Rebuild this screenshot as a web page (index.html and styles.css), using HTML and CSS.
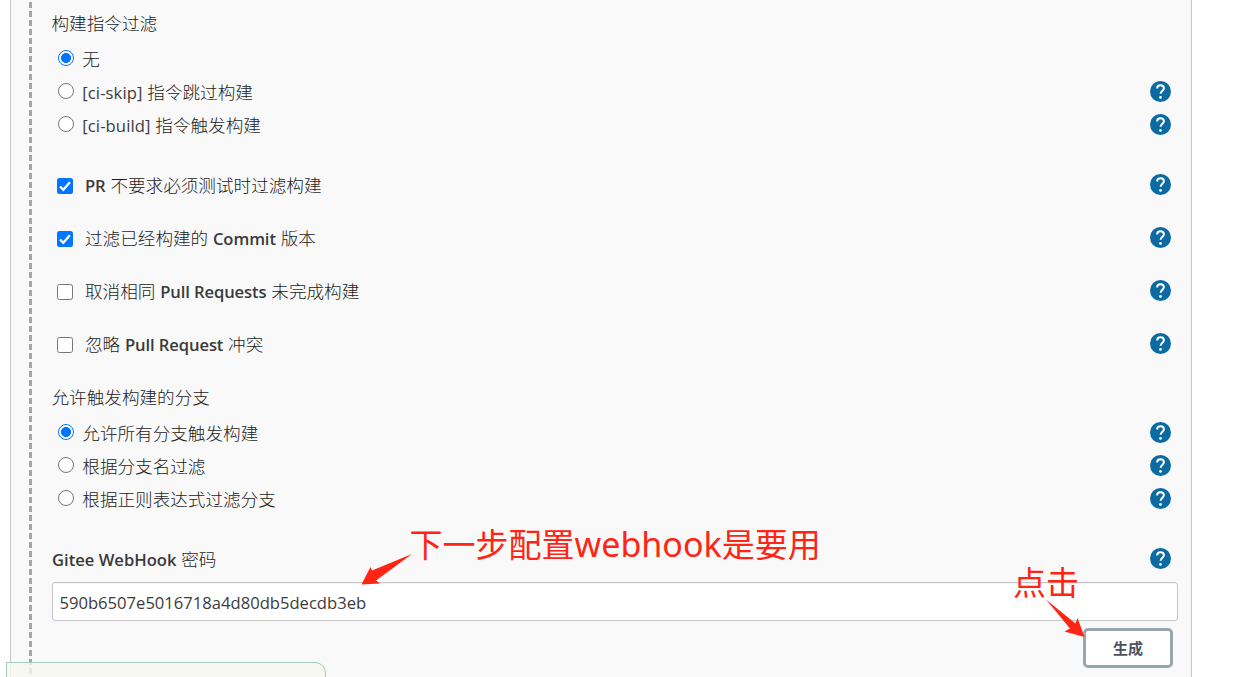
FILE: index.html
```html
<!DOCTYPE html>
<html lang="zh-CN">
<head>
<meta charset="utf-8">
<title>Gitee WebHook</title>
<link rel="stylesheet" href="styles.css">
</head>
<body>
<svg class="defs" width="0" height="0">
  <symbol id="help" viewBox="0 0 21 21">
    <circle cx="10.5" cy="10.5" r="10.5" fill="#0b6aa2"/>
    <path d="M7.1 7.6C7.1 5.5 8.5 4.3 10.5 4.3s3.4 1.2 3.4 3c0 2.3-3.3 2.6-3.3 5.5" fill="none" stroke="#fff" stroke-width="2"/>
    <circle cx="10.5" cy="16.4" r="1.35" fill="#fff"/>
  </symbol>
</svg>
<main class="panel">
  <div class="rail"></div>
  <form class="content">
    <div class="heading">构建指令过滤</div>
    <div class="choice"><i class="radio on"></i><label>无</label></div>
    <div class="choice"><i class="radio"></i><label><span class="lat">[ci-skip]</span> 指令跳过构建</label><svg class="help"><use href="#help"/></svg></div>
    <div class="choice"><i class="radio"></i><label><span class="lat">[ci-build]</span> 指令触发构建</label><svg class="help"><use href="#help"/></svg></div>
    <div class="checks">
      <div class="check"><i class="box on"><svg viewBox="0 0 16 16"><path d="M3 8.5l3.3 3.3L12.9 4.2"/></svg></i><label><b>PR</b> 不要求必须测试时过滤构建</label><svg class="help"><use href="#help"/></svg></div>
      <div class="check"><i class="box on"><svg viewBox="0 0 16 16"><path d="M3 8.5l3.3 3.3L12.9 4.2"/></svg></i><label>过滤已经构建的 <b>Commit</b> 版本</label><svg class="help"><use href="#help"/></svg></div>
      <div class="check"><i class="box"></i><label>取消相同 <b>Pull Requests</b> 未完成构建</label><svg class="help"><use href="#help"/></svg></div>
      <div class="check"><i class="box"></i><label>忽略 <b>Pull Request</b> 冲突</label><svg class="help"><use href="#help"/></svg></div>
    </div>
    <div class="heading">允许触发构建的分支</div>
    <div class="choice"><i class="radio on"></i><label>允许所有分支触发构建</label><svg class="help"><use href="#help"/></svg></div>
    <div class="choice"><i class="radio"></i><label>根据分支名过滤</label><svg class="help"><use href="#help"/></svg></div>
    <div class="choice"><i class="radio"></i><label>根据正则表达式过滤分支</label><svg class="help"><use href="#help"/></svg></div>
    <div class="secret"><label><b>Gitee WebHook</b> 密码</label><svg class="help"><use href="#help"/></svg></div>
    <div class="field"><span class="lat">590b6507e5016718a4d80db5decdb3eb</span></div>
    <div class="actions"><button type="button">生成</button></div>
  </form>
</main>
<div class="toast"></div>
<svg class="arrows" width="1247" height="677">
  <path d="M412 554L372 570.5L370.5 567L361.5 584.5L380 583.5L376 580.5Z"/>
  <path d="M1046 599.5L1075.5 623.5L1077.5 618L1084.5 637L1064.5 631.5L1070 628.5Z"/>
</svg>
<div class="note note-next">下一步配置<span>webhook</span>是要用</div>
<div class="note note-click">点击</div>
</body>
</html>
```
FILE: styles.css
```css
* { box-sizing: border-box; }
body {
  margin: 0;
  height: 677px;
  overflow: hidden;
  position: relative;
  background: #fff;
  color: #1c1c1c;
  font: 300 17.6px/24px "Noto Sans CJK SC", sans-serif;
}
.defs { position: absolute; }
.panel {
  display: flex;
  width: 1182px;
  height: 677px;
  margin-left: 10px;
  padding-left: 18px;
  background: #f9f9f9;
  border: 1px solid #c8c8c8;
  border-width: 0 1px;
}
.rail {
  flex: none;
  width: 3px;
  height: 672px;
  margin-top: 2px;
  background: repeating-linear-gradient(#a6a6a6 0 6px, transparent 6px 9px);
}
.content { width: 1126px; margin-left: 20px; padding-top: 11px; }
.heading { height: 31px; margin-left: -0.5px; }
label { white-space: pre; word-spacing: 0.9px; }
.lat { font: 400 16.6px/24px "Open Sans", sans-serif; color: #3c3c3c; }
b { font: 600 16.6px/24px "Open Sans", sans-serif; letter-spacing: -0.1px; word-spacing: 0; color: #3a3a3a; }
.choice, .check, .secret { display: flex; align-items: center; padding-right: 7px; }
.choice { height: 33px; padding-left: 6px; }
.choice label { padding-top: 1px; }
.choice .lat { letter-spacing: 0.1px; }
.help { flex: none; width: 21px; height: 21px; margin: 0 0 1px auto; }
.check .help { margin-bottom: 3px; }
.radio {
  width: 16px;
  height: 16px;
  margin: 0 8.3px 2px 0;
  border: 1px solid #767676;
  border-radius: 50%;
  background: #fff;
}
.radio.on {
  border: 1.5px solid #0075ff;
  background: radial-gradient(circle, #0075ff 4.7px, #fff 5.3px);
}
.checks { padding: 18px 0 14px; }
.check { height: 53px; padding-left: 5px; }
.box {
  width: 16px;
  height: 16px;
  margin-right: 12px;
  border: 1px solid #767676;
  border-radius: 2.5px;
  background: #fff;
}
.box.on { border: 0; background: #0075ff; }
.box svg { display: block; width: 16px; height: 16px; fill: none; stroke: #fff; stroke-width: 2.3; }
.secret { height: 24px; margin-top: 32px; }
.secret b { letter-spacing: 0; }
.field {
  height: 39px;
  margin-top: 11px;
  padding: 8px 6.5px 6px;
  border: 1px solid #c6c6c6;
  border-radius: 3px;
  background: #fff;
  box-shadow: inset 0 1px 1px rgba(0, 0, 0, .06);
}
.field .lat { display: block; }
.actions { display: flex; justify-content: flex-end; padding: 7px 5px 0 0; }
button {
  width: 90px;
  height: 40px;
  padding: 0;
  border: 3px solid #98a6ad;
  border-radius: 5px;
  background: #fff;
  color: #4d545d;
  font: 700 15px/24px "Noto Sans CJK SC", sans-serif;
}
.toast {
  position: absolute;
  left: 6px;
  top: 662px;
  width: 320px;
  height: 40px;
  border: 1px solid #a3cdb8;
  border-radius: 0 11px 0 0;
  background: rgba(246, 248, 238, .8);
}
.arrows { position: absolute; left: 0; top: 0; fill: #ff2414; }
.note {
  position: absolute;
  color: #ff2414;
  font: 400 33px/44px "Noto Sans CJK SC", sans-serif;
  white-space: nowrap;
}
.note span { font: 400 34px/44px "Noto Sans", sans-serif; }
.note-next { left: 409.5px; top: 521px; }
.note-click { left: 1013px; top: 559px; }
```
